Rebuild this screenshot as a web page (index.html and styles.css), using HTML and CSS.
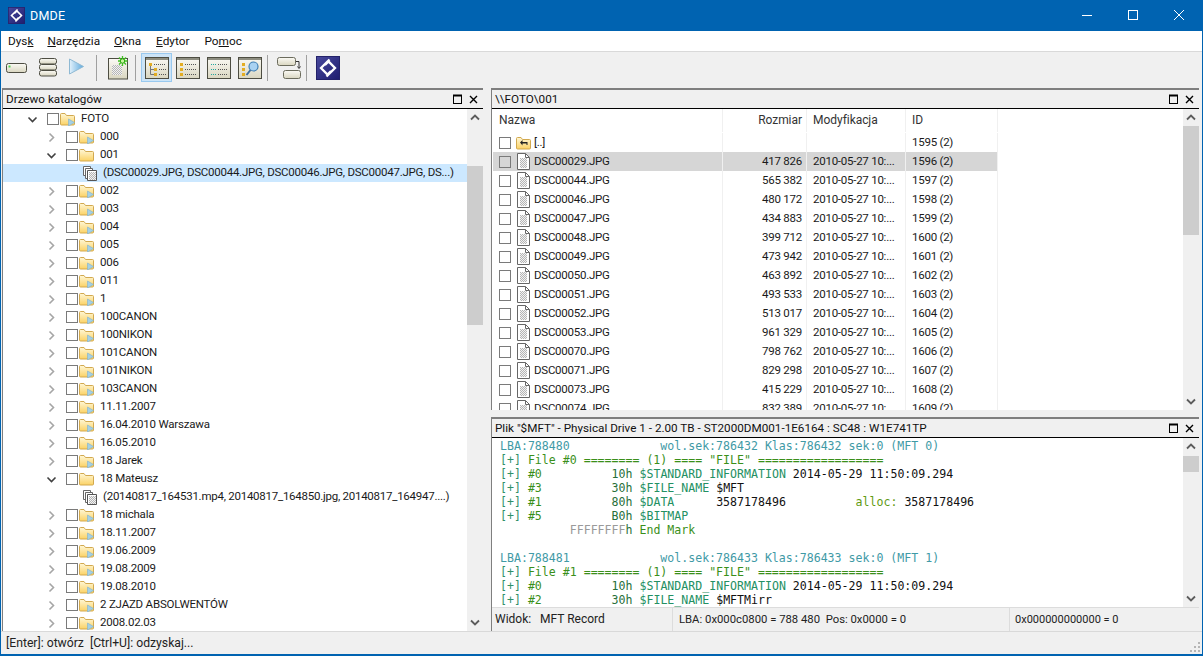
FILE: index.html
```html
<!DOCTYPE html>
<html lang="pl">
<head>
<meta charset="utf-8">
<title>DMDE</title>
<link rel="stylesheet" href="styles.css">
</head>
<body>
<svg class="defs" aria-hidden="true">
  <defs>
    <linearGradient id="gFolder" x1="0" y1="0" x2="0" y2="1"><stop offset="0" stop-color="#fff7d6"/><stop offset="1" stop-color="#fbd265"/></linearGradient>
    <linearGradient id="gCream" x1="0" y1="0" x2="0" y2="1"><stop offset="0" stop-color="#fbfaf5"/><stop offset="1" stop-color="#d9d6c0"/></linearGradient>
    <linearGradient id="gPlay" x1="0" y1="0" x2="1" y2="0"><stop offset="0" stop-color="#e4f2fb"/><stop offset="1" stop-color="#5da9de"/></linearGradient>
    <linearGradient id="gLogo" x1="0" y1="0" x2="1" y2="1"><stop offset="0" stop-color="#4a4a9e"/><stop offset="1" stop-color="#1d1c6e"/></linearGradient>
    <pattern id="pDither" width="2" height="2" patternUnits="userSpaceOnUse"><rect width="2" height="2" fill="#f2f2f2"/><rect width="1" height="1" fill="#b5b5b5"/><rect x="1" y="1" width="1" height="1" fill="#b5b5b5"/></pattern>
    <symbol id="folder" viewBox="0 0 15 14"><path d="M.5 12V2.500q0-1 1-1h3.500l1.500 2h7q1 0 1 1V12q0 1-1 1H1.500q-1 0-1-1z" fill="url(#gFolder)" stroke="#d2a94f"/></symbol>
    <symbol id="folder-more" viewBox="0 0 15 14"><path d="M.5 12V2.500q0-1 1-1h3.500l1.500 2h7q1 0 1 1V12q0 1-1 1H1.500q-1 0-1-1z" fill="url(#gFolder)" stroke="#d2a94f"/><path d="M8.500 7l6 3.500-6 3.500z" fill="#a4d0e6" stroke="#7fb2cd" stroke-width=".6"/></symbol>
    <symbol id="folder-up" viewBox="0 0 15 14"><path d="M.5 12V2.500q0-1 1-1h3.500l1.500 2h7q1 0 1 1V12q0 1-1 1H1.500q-1 0-1-1z" fill="url(#gFolder)" stroke="#d2a94f"/><path d="M4 6.500L6.500 4v2h5v3h-1V7.500H6.500v2z" fill="#222"/></symbol>
    <symbol id="file" viewBox="0 0 13 17"><path d="M.5.5h8l4 4v12H.5z" fill="#fff" stroke="#666"/><path d="M8.500.5v4h4" fill="none" stroke="#666"/><rect x="3" y="5" width="7" height="10" fill="url(#pDither)"/></symbol>
    <symbol id="files" viewBox="0 0 14 15"><path d="M.5.5h7v9h-7z" fill="#fff" stroke="#666"/><path d="M2.500 2.500h7v10h-7z" fill="#fff" stroke="#666"/><path d="M4.500 4.500h9v10h-9z" fill="#fff" stroke="#555"/><rect x="6" y="6" width="7" height="8" fill="url(#pDither)"/></symbol>
    <symbol id="logo" viewBox="0 0 24 24"><rect width="24" height="24" fill="url(#gLogo)"/><rect x=".5" y=".5" width="23" height="23" fill="none" stroke="#23226a"/><path d="M13.500 3.500L5 12l6.500 6.500 3.500-3.500M10.500 20.500L19 12l-6.500-6.500L9 9" fill="none" stroke="#fff" stroke-width="2.300"/></symbol>
    <symbol id="panel" viewBox="0 0 24 22"><rect x=".5" y=".5" width="23" height="21" fill="url(#gCream)" stroke="#4d4d42"/><rect x="1" y="1" width="22" height="2" fill="#8d8d80"/></symbol>
  </defs>
</svg>
<div class="window">
  <header class="titlebar">
    <svg class="title-logo"><use href="#logo"/></svg>
    <span class="title-text">DMDE</span>
    <div class="caption">
      <svg class="cap" viewBox="0 0 46 31"><path d="M18 15.500h10" stroke="#fff" fill="none"/></svg>
      <svg class="cap" viewBox="0 0 46 31"><rect x="18.500" y="10.500" width="9" height="9" stroke="#fff" fill="none"/></svg>
      <svg class="cap" viewBox="0 0 46 31"><path d="M18 10l10 10M28 10L18 20" stroke="#fff" fill="none"/></svg>
    </div>
  </header>

  <nav class="menubar">
    <span class="menu menu-dysk">Dys<u>k</u></span>
    <span class="menu menu-narz"><u>N</u>arzędzia</span>
    <span class="menu menu-okna"><u>O</u>kna</span>
    <span class="menu menu-edyt"><u>E</u>dytor</span>
    <span class="menu menu-pomo">Po<u>m</u>oc</span>
  </nav>

  <div class="toolbar">
    <span class="tool"><svg class="ic24" viewBox="0 0 24 22"><rect x="1.500" y="6.500" width="20" height="9" rx="2" fill="url(#gCream)" stroke="#4d4d42"/><rect x="3.500" y="8.500" width="2" height="2" fill="#4fd64f"/></svg></span>
    <span class="tool"><svg class="ic24" viewBox="0 0 24 22"><g fill="url(#gCream)" stroke="#4d4d42"><rect x="3.500" y="1.500" width="17" height="5.500" rx="2"/><rect x="3.500" y="7.500" width="17" height="5.500" rx="2"/><rect x="3.500" y="13.500" width="17" height="5.500" rx="2"/></g></svg></span>
    <span class="tool"><svg class="ic24" viewBox="0 0 24 22"><path d="M2.500 2l14 7.500-14 7.500z" fill="url(#gPlay)" stroke="#8fb9d3"/></svg></span>
    <span class="sep"></span>
    <span class="tool"><svg class="ic-full" viewBox="0 0 24 24"><rect x="2.500" y="2.500" width="19" height="20.500" fill="url(#gCream)" stroke="#4d4d42"/><rect x="6" y="9" width="10" height="10" fill="url(#pDither)"/><path d="M16.500 0v10M12 5h9.500M13 1.500l7 7M20 1.500l-7 7" stroke="#3fc21f" stroke-width="1.300"/><circle cx="16.500" cy="5" r="2.200" fill="#c8f59e" stroke="#2fa814"/></svg></span>
    <span class="sep"></span>
    <span class="tool tool-on"><svg class="ic24"><use href="#panel"/><g fill="#e3ad22"><rect x="4" y="6" width="3" height="3"/><rect x="9" y="11" width="3" height="3"/><rect x="9" y="16" width="3" height="3"/></g><path d="M5.500 9v8.500H9M5.500 12.500H9" stroke="#777" fill="none"/><path d="M9 7.500h11M14 12.500h7M14 17.500h7" stroke="#555" stroke-dasharray="1 1" fill="none"/></svg></span>
    <span class="tool"><svg class="ic24"><use href="#panel"/><g fill="#e3ad22"><rect x="4" y="6" width="3" height="3"/><rect x="4" y="11" width="3" height="3"/><rect x="4" y="16" width="3" height="3"/></g><path d="M9 7.500h11M9 12.500h11M9 17.500h11" stroke="#555" stroke-dasharray="1 1" fill="none"/></svg></span>
    <span class="tool"><svg class="ic24"><use href="#panel"/><path d="M4 7.500h6M4 12.500h6M4 17.500h6" stroke="#25a8a0" stroke-dasharray="1 1" fill="none"/><path d="M11 7.500h9M11 12.500h9M11 17.500h9" stroke="#555" stroke-dasharray="1 1" fill="none"/></svg></span>
    <span class="tool"><svg class="ic24"><use href="#panel"/><g fill="#e3ad22"><rect x="4" y="6" width="3" height="3"/><rect x="4" y="11" width="3" height="3"/><rect x="4" y="16" width="3" height="3"/></g><circle cx="15.500" cy="9.500" r="4.500" fill="#a9d2f2" stroke="#3f7fb5" stroke-width="1.200"/><path d="M12.500 13l-4 5" stroke="#3f6f9f" stroke-width="2"/></svg></span>
    <span class="sep"></span>
    <span class="tool"><svg class="ic24" viewBox="0 0 24 22"><rect x=".5" y=".5" width="18" height="8" rx="2" fill="url(#gCream)" stroke="#6b6b5c"/><rect x="6.500" y="13.500" width="17" height="8" rx="2" fill="url(#gCream)" stroke="#6b6b5c"/><path d="M19 4.500h3v6M20.500 9.500l1.500 2 1.500-2" fill="none" stroke="#333"/></svg></span>
    <span class="sep"></span>
    <span class="tool"><svg class="ic-full" viewBox="0 0 24 24"><use href="#logo"/></svg></span>
  </div>

  <main class="workspace">
    <section class="panel panel-left">
      <div class="panel-head">
        <span class="panel-title">Drzewo katalogów</span>
        <svg class="head-btns" viewBox="0 0 29 11"><rect x=".5" y="1.500" width="8" height="8" fill="none" stroke="#000"/><path d="M0 1.500h9" stroke="#000" stroke-width="2"/><path d="M17 2l7 7M24 2l-7 7" stroke="#000" stroke-width="1.400"/></svg>
      </div>
      <div class="panel-body">
        <div class="tree">
          <div class="node"><svg class="chev open"><path d="M1.500 3.500L5.500 7.500 9.500 3.500"/></svg><span class="check"></span><svg class="folder"><use href="#folder-more"/></svg><span class="label">FOTO</span></div>
          <div class="node d1"><svg class="chev"><path d="M3.500 1.500L7.500 5.500 3.500 9.500"/></svg><span class="check"></span><svg class="folder"><use href="#folder-more"/></svg><span class="label">000</span></div>
          <div class="node d1"><svg class="chev open"><path d="M1.500 3.500L5.500 7.500 9.500 3.500"/></svg><span class="check"></span><svg class="folder"><use href="#folder"/></svg><span class="label">001</span></div>
          <div class="node leaf sel"><svg class="files"><use href="#files"/></svg><span class="label">(DSC00029.JPG, DSC00044.JPG, DSC00046.JPG, DSC00047.JPG, DS...)</span></div>
          <div class="node d1"><svg class="chev"><path d="M3.500 1.500L7.500 5.500 3.500 9.500"/></svg><span class="check"></span><svg class="folder"><use href="#folder-more"/></svg><span class="label">002</span></div>
          <div class="node d1"><svg class="chev"><path d="M3.500 1.500L7.500 5.500 3.500 9.500"/></svg><span class="check"></span><svg class="folder"><use href="#folder-more"/></svg><span class="label">003</span></div>
          <div class="node d1"><svg class="chev"><path d="M3.500 1.500L7.500 5.500 3.500 9.500"/></svg><span class="check"></span><svg class="folder"><use href="#folder-more"/></svg><span class="label">004</span></div>
          <div class="node d1"><svg class="chev"><path d="M3.500 1.500L7.500 5.500 3.500 9.500"/></svg><span class="check"></span><svg class="folder"><use href="#folder-more"/></svg><span class="label">005</span></div>
          <div class="node d1"><svg class="chev"><path d="M3.500 1.500L7.500 5.500 3.500 9.500"/></svg><span class="check"></span><svg class="folder"><use href="#folder-more"/></svg><span class="label">006</span></div>
          <div class="node d1"><svg class="chev"><path d="M3.500 1.500L7.500 5.500 3.500 9.500"/></svg><span class="check"></span><svg class="folder"><use href="#folder-more"/></svg><span class="label">011</span></div>
          <div class="node d1"><svg class="chev"><path d="M3.500 1.500L7.500 5.500 3.500 9.500"/></svg><span class="check"></span><svg class="folder"><use href="#folder-more"/></svg><span class="label">1</span></div>
          <div class="node d1"><svg class="chev"><path d="M3.500 1.500L7.500 5.500 3.500 9.500"/></svg><span class="check"></span><svg class="folder"><use href="#folder-more"/></svg><span class="label">100CANON</span></div>
          <div class="node d1"><svg class="chev"><path d="M3.500 1.500L7.500 5.500 3.500 9.500"/></svg><span class="check"></span><svg class="folder"><use href="#folder-more"/></svg><span class="label">100NIKON</span></div>
          <div class="node d1"><svg class="chev"><path d="M3.500 1.500L7.500 5.500 3.500 9.500"/></svg><span class="check"></span><svg class="folder"><use href="#folder-more"/></svg><span class="label">101CANON</span></div>
          <div class="node d1"><svg class="chev"><path d="M3.500 1.500L7.500 5.500 3.500 9.500"/></svg><span class="check"></span><svg class="folder"><use href="#folder-more"/></svg><span class="label">101NIKON</span></div>
          <div class="node d1"><svg class="chev"><path d="M3.500 1.500L7.500 5.500 3.500 9.500"/></svg><span class="check"></span><svg class="folder"><use href="#folder-more"/></svg><span class="label">103CANON</span></div>
          <div class="node d1"><svg class="chev"><path d="M3.500 1.500L7.500 5.500 3.500 9.500"/></svg><span class="check"></span><svg class="folder"><use href="#folder-more"/></svg><span class="label">11.11.2007</span></div>
          <div class="node d1"><svg class="chev"><path d="M3.500 1.500L7.500 5.500 3.500 9.500"/></svg><span class="check"></span><svg class="folder"><use href="#folder-more"/></svg><span class="label">16.04.2010 Warszawa</span></div>
          <div class="node d1"><svg class="chev"><path d="M3.500 1.500L7.500 5.500 3.500 9.500"/></svg><span class="check"></span><svg class="folder"><use href="#folder-more"/></svg><span class="label">16.05.2010</span></div>
          <div class="node d1"><svg class="chev"><path d="M3.500 1.500L7.500 5.500 3.500 9.500"/></svg><span class="check"></span><svg class="folder"><use href="#folder-more"/></svg><span class="label">18 Jarek</span></div>
          <div class="node d1"><svg class="chev open"><path d="M1.500 3.500L5.500 7.500 9.500 3.500"/></svg><span class="check"></span><svg class="folder"><use href="#folder"/></svg><span class="label">18 Mateusz</span></div>
          <div class="node leaf"><svg class="files"><use href="#files"/></svg><span class="label">(20140817_164531.mp4, 20140817_164850.jpg, 20140817_164947....)</span></div>
          <div class="node d1"><svg class="chev"><path d="M3.500 1.500L7.500 5.500 3.500 9.500"/></svg><span class="check"></span><svg class="folder"><use href="#folder-more"/></svg><span class="label">18 michala</span></div>
          <div class="node d1"><svg class="chev"><path d="M3.500 1.500L7.500 5.500 3.500 9.500"/></svg><span class="check"></span><svg class="folder"><use href="#folder-more"/></svg><span class="label">18.11.2007</span></div>
          <div class="node d1"><svg class="chev"><path d="M3.500 1.500L7.500 5.500 3.500 9.500"/></svg><span class="check"></span><svg class="folder"><use href="#folder-more"/></svg><span class="label">19.06.2009</span></div>
          <div class="node d1"><svg class="chev"><path d="M3.500 1.500L7.500 5.500 3.500 9.500"/></svg><span class="check"></span><svg class="folder"><use href="#folder-more"/></svg><span class="label">19.08.2009</span></div>
          <div class="node d1"><svg class="chev"><path d="M3.500 1.500L7.500 5.500 3.500 9.500"/></svg><span class="check"></span><svg class="folder"><use href="#folder-more"/></svg><span class="label">19.08.2010</span></div>
          <div class="node d1"><svg class="chev"><path d="M3.500 1.500L7.500 5.500 3.500 9.500"/></svg><span class="check"></span><svg class="folder"><use href="#folder-more"/></svg><span class="label">2 ZJAZD ABSOLWENTÓW</span></div>
          <div class="node d1"><svg class="chev"><path d="M3.500 1.500L7.500 5.500 3.500 9.500"/></svg><span class="check"></span><svg class="folder"><use href="#folder-more"/></svg><span class="label">2008.02.03</span></div>
        </div>
        <div class="vbar">
          <svg class="arrow" viewBox="0 0 16 16"><path d="M4 10l4-4 4 4"/></svg>
          <div class="thumb thumb-tree"></div>
          <svg class="arrow arrow-end" viewBox="0 0 16 16"><path d="M4 6l4 4 4-4"/></svg>
        </div>
      </div>
    </section>

    <div class="right-col">
      <section class="panel panel-files">
        <div class="panel-head">
          <span class="panel-title">\\FOTO\001</span>
          <svg class="head-btns" viewBox="0 0 29 11"><rect x=".5" y="1.500" width="8" height="8" fill="none" stroke="#000"/><path d="M0 1.500h9" stroke="#000" stroke-width="2"/><path d="M17 2l7 7M24 2l-7 7" stroke="#000" stroke-width="1.400"/></svg>
        </div>
        <div class="panel-body">
          <div class="filelist">
            <div class="frow fhead"><span class="c-name">Nazwa</span><span class="c-size">Rozmiar</span><span class="c-date">Modyfikacja</span><span class="c-id">ID</span></div>
            <div class="frow"><span class="c-name"><span class="check"></span><svg class="ficon wide"><use href="#folder-up"/></svg>[..]</span><span class="c-size"></span><span class="c-date"></span><span class="c-id">1595 (2)</span></div>
            <div class="frow fsel"><span class="c-name"><span class="check"></span><svg class="ficon"><use href="#file"/></svg>DSC00029.JPG</span><span class="c-size">417 826</span><span class="c-date">2010-05-27 10:...</span><span class="c-id">1596 (2)</span></div>
            <div class="frow"><span class="c-name"><span class="check"></span><svg class="ficon"><use href="#file"/></svg>DSC00044.JPG</span><span class="c-size">565 382</span><span class="c-date">2010-05-27 10:...</span><span class="c-id">1597 (2)</span></div>
            <div class="frow"><span class="c-name"><span class="check"></span><svg class="ficon"><use href="#file"/></svg>DSC00046.JPG</span><span class="c-size">480 172</span><span class="c-date">2010-05-27 10:...</span><span class="c-id">1598 (2)</span></div>
            <div class="frow"><span class="c-name"><span class="check"></span><svg class="ficon"><use href="#file"/></svg>DSC00047.JPG</span><span class="c-size">434 883</span><span class="c-date">2010-05-27 10:...</span><span class="c-id">1599 (2)</span></div>
            <div class="frow"><span class="c-name"><span class="check"></span><svg class="ficon"><use href="#file"/></svg>DSC00048.JPG</span><span class="c-size">399 712</span><span class="c-date">2010-05-27 10:...</span><span class="c-id">1600 (2)</span></div>
            <div class="frow"><span class="c-name"><span class="check"></span><svg class="ficon"><use href="#file"/></svg>DSC00049.JPG</span><span class="c-size">473 942</span><span class="c-date">2010-05-27 10:...</span><span class="c-id">1601 (2)</span></div>
            <div class="frow"><span class="c-name"><span class="check"></span><svg class="ficon"><use href="#file"/></svg>DSC00050.JPG</span><span class="c-size">463 892</span><span class="c-date">2010-05-27 10:...</span><span class="c-id">1602 (2)</span></div>
            <div class="frow"><span class="c-name"><span class="check"></span><svg class="ficon"><use href="#file"/></svg>DSC00051.JPG</span><span class="c-size">493 533</span><span class="c-date">2010-05-27 10:...</span><span class="c-id">1603 (2)</span></div>
            <div class="frow"><span class="c-name"><span class="check"></span><svg class="ficon"><use href="#file"/></svg>DSC00052.JPG</span><span class="c-size">513 017</span><span class="c-date">2010-05-27 10:...</span><span class="c-id">1604 (2)</span></div>
            <div class="frow"><span class="c-name"><span class="check"></span><svg class="ficon"><use href="#file"/></svg>DSC00053.JPG</span><span class="c-size">961 329</span><span class="c-date">2010-05-27 10:...</span><span class="c-id">1605 (2)</span></div>
            <div class="frow"><span class="c-name"><span class="check"></span><svg class="ficon"><use href="#file"/></svg>DSC00070.JPG</span><span class="c-size">798 762</span><span class="c-date">2010-05-27 10:...</span><span class="c-id">1606 (2)</span></div>
            <div class="frow"><span class="c-name"><span class="check"></span><svg class="ficon"><use href="#file"/></svg>DSC00071.JPG</span><span class="c-size">829 298</span><span class="c-date">2010-05-27 10:...</span><span class="c-id">1607 (2)</span></div>
            <div class="frow"><span class="c-name"><span class="check"></span><svg class="ficon"><use href="#file"/></svg>DSC00073.JPG</span><span class="c-size">415 229</span><span class="c-date">2010-05-27 10:...</span><span class="c-id">1608 (2)</span></div>
            <div class="frow"><span class="c-name"><span class="check"></span><svg class="ficon"><use href="#file"/></svg>DSC00074.JPG</span><span class="c-size">832 389</span><span class="c-date">2010-05-27 10:...</span><span class="c-id">1609 (2)</span></div>
          </div>
          <div class="vbar">
            <svg class="arrow" viewBox="0 0 16 16"><path d="M4 10l4-4 4 4"/></svg>
            <div class="thumb thumb-files"></div>
            <svg class="arrow arrow-end" viewBox="0 0 16 16"><path d="M4 6l4 4 4-4"/></svg>
          </div>
        </div>
      </section>

      <section class="panel panel-hex">
        <div class="panel-head">
          <span class="panel-title">Plik "$MFT" - Physical Drive 1 - 2.00 TB - ST2000DM001-1E6164 : SC48 : W1E741TP</span>
          <svg class="head-btns" viewBox="0 0 29 11"><rect x=".5" y="1.500" width="8" height="8" fill="none" stroke="#000"/><path d="M0 1.500h9" stroke="#000" stroke-width="2"/><path d="M17 2l7 7M24 2l-7 7" stroke="#000" stroke-width="1.400"/></svg>
        </div>
        <div class="panel-body">
<pre class="code"><span class="t">LBA:788480             wol.sek:786432 Klas:786432 sek:0 (MFT 0)</span>
<span class="p">[+]</span><span class="f"> File #0 ======== (1) ==== "FILE" ==================</span>
<span class="p">[+]</span><span class="f"> #0</span>          <span class="h">10h</span> <span class="a">$STANDARD_INFORMATION</span> 2014-05-29 11:50:09.294
<span class="p">[+]</span><span class="f"> #3</span>          <span class="h">30h</span> <span class="a">$FILE_NAME</span> $MFT
<span class="p">[+]</span><span class="f"> #1</span>          <span class="h">80h</span> <span class="a">$DATA</span>      3587178496          <span class="o">alloc:</span> 3587178496
<span class="p">[+]</span><span class="f"> #5</span>          <span class="h">B0h</span> <span class="a">$BITMAP</span>
          <span class="g">FFFFFFFF</span><span class="h">h</span> <span class="f">End Mark</span>

<span class="t">LBA:788481             wol.sek:786433 Klas:786433 sek:0 (MFT 1)</span>
<span class="p">[+]</span><span class="f"> File #1 ======== (1) ==== "FILE" ==================</span>
<span class="p">[+]</span><span class="f"> #0</span>          <span class="h">10h</span> <span class="a">$STANDARD_INFORMATION</span> 2014-05-29 11:50:09.294
<span class="p">[+]</span><span class="f"> #2</span>          <span class="h">30h</span> <span class="a">$FILE_NAME</span> $MFTMirr</pre>
          <div class="vbar">
            <svg class="arrow" viewBox="0 0 16 16"><path d="M4 10l4-4 4 4"/></svg>
            <div class="thumb thumb-hex"></div>
            <svg class="arrow arrow-end" viewBox="0 0 16 16"><path d="M4 6l4 4 4-4"/></svg>
          </div>
        </div>
        <div class="hexstatus">
          <span class="hs hs-view"><span class="hs-key">Widok:</span>MFT Record</span>
          <span class="hs hs-lba">LBA: 0x000c0800 = 788 480&nbsp; Pos: 0x0000 = 0</span>
          <span class="hs hs-off">0x000000000000 = 0</span>
        </div>
      </section>
    </div>
  </main>

  <footer class="statusbar">
    <span>[Enter]: otwórz&nbsp; [Ctrl+U]: odzyskaj...</span>
    <svg class="grip" viewBox="0 0 12 12"><g fill="#b5b5b5"><rect x="9" y="1" width="2" height="2"/><rect x="5" y="5" width="2" height="2"/><rect x="9" y="5" width="2" height="2"/><rect x="1" y="9" width="2" height="2"/><rect x="5" y="9" width="2" height="2"/><rect x="9" y="9" width="2" height="2"/></g></svg>
  </footer>
</div>
</body>
</html>
```
FILE: styles.css
```css
* { box-sizing: border-box; }
html, body { margin: 0; padding: 0; height: 100%; overflow: hidden; }
body { font: 11.5px/1.2 Roboto, "Noto Sans", sans-serif; color: #1a1a1a; background: #f0f0f0; }
.defs { display: block; width: 0; height: 0; }
svg { display: block; flex: none; }

.window {
  width: 1203px; height: 656px;
  display: flex; flex-direction: column;
  border: solid #0063b1; border-width: 0 1px 2px 1px;
  background: #f0f0f0;
}

/* title bar */
.titlebar { height: 31px; flex: none; display: flex; align-items: center; background: #0063b1; color: #fff; padding-left: 7px; }
.title-logo { width: 17px; height: 17px; }
.title-text { margin-left: 5px; font-size: 12.5px; letter-spacing: .2px; }
.caption { margin-left: auto; display: flex; }
.cap { width: 46px; height: 31px; }

/* menu */
.menubar { height: 21px; flex: none; display: flex; align-items: center; background: #fff; border-bottom: 1px solid #d9d9d9; padding-left: 7px; font-size: 11.800px; color: #111; }
.menu-narz { margin-left: 14px; }
.menu-okna { margin-left: 14px; }
.menu-edyt { margin-left: 15px; }
.menu-pomo { margin-left: 15px; }

/* toolbar */
.toolbar { height: 36px; flex: none; display: flex; align-items: flex-start; padding: 1px 0 0 0; }
.tool { width: 31px; height: 29px; display: flex; align-items: center; justify-content: center; border: 1px solid transparent; }
.tool-on { background: #cce4f7; border-color: #99c9ef; }
.ic24 { width: 24px; height: 22px; }
.ic-full { width: 24px; height: 24px; }
.sep { width: 1px; height: 26px; margin: 2px 5px 0 2px; background: #a0a0a0; }

/* panels */
.workspace { flex: 1; display: flex; min-height: 0; padding-left: 1px; }
.panel { display: flex; flex-direction: column; min-height: 0; border-top: 2px solid #7f7f7f; border-left: 1px solid #7f7f7f; background: #fff; }
.panel-left { width: 481px; }
.right-col { width: 708px; margin-left: 8px; display: flex; flex-direction: column; }
.panel-files { height: 322px; flex: none; }
.panel-hex { flex: 1; margin-top: 7px; }
.panel-head { height: 19px; flex: none; display: flex; align-items: center; justify-content: space-between; background: #f0f0f0; border-bottom: 1px solid #000; padding: 0 1px 0 3px; color: #111; font-size: 11.700px; }
.head-btns { width: 29px; height: 11px; }
.panel-body { flex: 1; display: flex; min-height: 0; overflow: hidden; }

/* tree */
.tree { flex: 1; min-width: 0; overflow: hidden; padding-top: 1px; }
.node { height: 18px; display: flex; align-items: center; padding-left: 24px; white-space: nowrap; letter-spacing: -.2px; }
.node.d1 { padding-left: 43px; }
.node.leaf { padding-left: 80px; letter-spacing: -.25px; }
.sel { background: #cce8ff; }
.chev { width: 11px; height: 11px; }
.chev path { fill: none; stroke: #a6a6a6; stroke-width: 1.600; }
.chev.open path { stroke: #404040; }
.check { width: 12px; height: 12px; flex: none; border: 1px solid #7a7a7a; background: #fff; }
.chev + .check { margin-left: 9px; }
.folder { width: 15px; height: 14px; margin-left: 1px; }
.label { margin-left: 6px; }
.files { width: 14px; height: 15px; }

/* scrollbars */
.vbar { width: 16px; flex: none; display: flex; flex-direction: column; background: #f0f0f0; }
.arrow { width: 16px; height: 17px; flex: none; }
.arrow path { fill: none; stroke: #5c5c5c; stroke-width: 1.800; }
.arrow-end { margin-top: auto; }
.thumb { width: 16px; background: #cdcdcd; flex: none; }
.thumb-tree { margin-top: 40px; height: 159px; }
.thumb-files { height: 109px; }
.thumb-hex { height: 16px; }

/* file list */
.filelist { flex: 1; min-width: 0; overflow: hidden; padding-left: 1px; }
.frow { height: 19px; width: 505px; display: grid; grid-template-columns: 230px 84px 99px 92px; letter-spacing: -.25px; }
.frow > span { display: flex; align-items: center; border-right: 1px solid #f0f0f0; white-space: nowrap; overflow: hidden; }
.fhead { height: 24px; padding-bottom: 1px; color: #333; font-size: 12px; letter-spacing: -.05px; }
.c-name { padding-left: 6px; }
.c-size { justify-content: flex-end; padding-right: 4px; }
.c-date { padding-left: 6px; }
.c-id { padding-left: 6px; }
.fsel { background: #d6d6d6; }
.fsel .check { background: #d6d6d6; }
.ficon { width: 13px; height: 17px; margin: 0 4px 0 6px; }
.ficon.wide { width: 15px; height: 14px; margin: 0 3px 0 5px; }

/* hex view */
.code { flex: 1; min-width: 0; margin: 0; padding: 1px 0 0 8px; overflow: hidden; font: 11.580px/14px "DejaVu Sans Mono", "Liberation Mono", monospace; color: #111; }
.t { color: #3f9aa6; }
.p { color: #2f9068; }
.f { color: #3a8f1a; }
.h { color: #276f3a; }
.a { color: #249063; }
.o { color: #5f9a12; }
.g { color: #9a9a9a; }
.panel-hex .thumb-hex { margin-top: 1px; }
.hexstatus { height: 24px; flex: none; display: flex; align-items: center; background: #f0f0f0; border-top: 1px solid #dcdcdc; color: #222; }
.hs { height: 100%; display: flex; align-items: center; border-right: 1px solid #dcdcdc; padding-left: 3px; }
.hs-view { width: 181px; font-size: 12px; }
.hs-key { width: 45px; }
.hs-lba { width: 337px; padding-left: 6px; font-size: 11.300px; }
.hs-off { border-right: 0; padding-left: 5px; font-size: 11px; }

/* status bar */
.statusbar { height: 23px; flex: none; display: flex; align-items: center; justify-content: space-between; border-top: 1px solid #d9d9d9; padding-left: 5px; color: #222; font-size: 12.200px; }
.grip { width: 12px; height: 12px; margin: 8px 1px 0 0; }
```
